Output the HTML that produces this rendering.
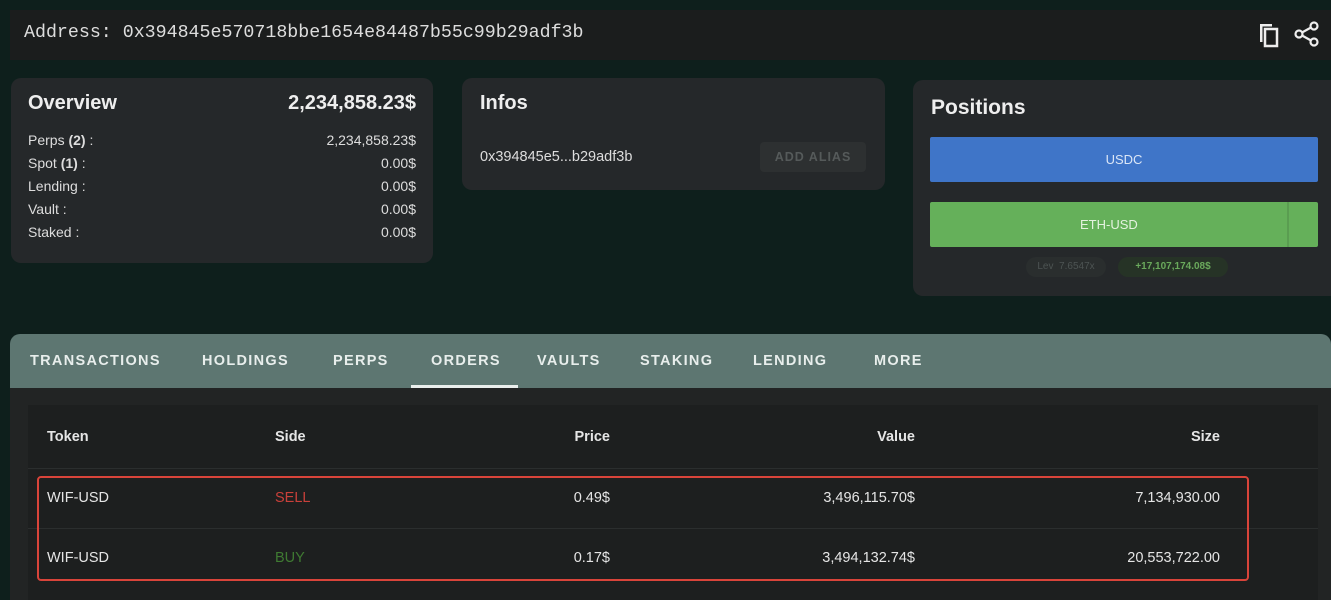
<!DOCTYPE html>
<html><head><style>
*{box-sizing:border-box;margin:0;padding:0}
body{width:1331px;height:600px;background:#0e1f1c;font-family:"Liberation Sans",sans-serif;color:#e6e6e6;position:relative;overflow:hidden}
.abs{position:absolute}
.card{background:#25282a;border-radius:10px}
.addr{left:10px;top:10px;width:1321px;height:50px;background:#1b1d1d;font-family:"Liberation Mono",monospace;font-size:18.3px;color:#ddd;padding:13px 14px}
.row{display:flex;justify-content:space-between;font-size:14px;color:#ddd;height:23px}
.tabs{left:10px;top:334px;width:1321px;height:54px;background:#5d7671;border-radius:10px 10px 0 0}
.tab{position:absolute;top:19px;font-size:14.5px;font-weight:bold;letter-spacing:1.3px;color:#e8eeec}
.panel{left:10px;top:388px;width:1321px;height:212px;background:#222424}
.tbl{left:28px;top:405px;width:1290px;height:195px;background:#1d1f1f}
.c{position:absolute;font-size:14.5px;color:#e5e5e5}
.line{position:absolute;left:28px;width:1290px;height:1px;background:#2b2e2e}
</style></head><body>
<div class="abs addr">Address: 0x394845e570718bbe1654e84487b55c99b29adf3b</div>
<svg class="abs" style="left:1256px;top:20px" width="26" height="30" viewBox="0 0 26 30"><path d="M4 4h12v2.5H6.5V22H4z" fill="#eee"/><rect x="9" y="9" width="12" height="17" fill="none" stroke="#eee" stroke-width="2.5"/></svg>
<svg class="abs" style="left:1294px;top:21px" width="26" height="26" viewBox="0 0 26 26"><circle cx="20" cy="5" r="3.5" fill="none" stroke="#eee" stroke-width="2.2"/><circle cx="5" cy="13" r="3.5" fill="none" stroke="#eee" stroke-width="2.2"/><circle cx="20" cy="21" r="3.5" fill="none" stroke="#eee" stroke-width="2.2"/><path d="M8 11.5l9-5M8 14.5l9 5" stroke="#eee" stroke-width="2.2"/></svg>

<div class="abs card" style="left:11px;top:78px;width:422px;height:185px;padding:14px 17px">
<div style="display:flex;justify-content:space-between;font-size:20px;font-weight:bold;color:#eee;margin-bottom:17px"><span>Overview</span><span>2,234,858.23$</span></div>
<div class="row"><span>Perps <b>(2)</b> :</span><span>2,234,858.23$</span></div>
<div class="row"><span>Spot <b>(1)</b> :</span><span>0.00$</span></div>
<div class="row"><span>Lending :</span><span>0.00$</span></div>
<div class="row"><span>Vault :</span><span>0.00$</span></div>
<div class="row"><span>Staked :</span><span>0.00$</span></div>
</div>

<div class="abs card" style="left:462px;top:78px;width:423px;height:112px;padding:14px 18px">
<div style="font-size:20px;font-weight:bold;color:#eee">Infos</div>
<div style="position:absolute;left:18px;top:71px;font-size:14.5px;color:#ddd">0x394845e5...b29adf3b</div>
<div style="position:absolute;left:298px;top:64px;width:106px;height:30px;background:#2d3031;border-radius:4px;font-size:12.5px;font-weight:bold;letter-spacing:1px;color:#555a5a;text-align:center;line-height:30px">ADD ALIAS</div>
</div>

<div class="abs card" style="left:913px;top:80px;width:430px;height:216px">
<div style="position:absolute;left:18px;top:16px;font-size:21px;font-weight:bold;color:#eee">Positions</div>
<div style="position:absolute;left:17px;top:57px;width:388px;height:45px;background:#3f75c8;border-radius:2px;color:#dbe6f6;font-size:13px;text-align:center;line-height:45px">USDC</div>
<div style="position:absolute;left:17px;top:122px;width:388px;height:45px;background:#65b05a;border-radius:2px;color:#e4f2df;font-size:13px;line-height:45px"><span style="position:absolute;left:150px">ETH-USD</span><div style="position:absolute;left:357px;top:0;width:2px;height:45px;background:#5a9d51"></div></div>
<div style="position:absolute;left:113px;top:177px;width:80px;height:20px;background:#2a2e2e;border-radius:10px;font-size:10px;color:#4d5453;text-align:center;line-height:20px">Lev&nbsp;&nbsp;7.6547x</div>
<div style="position:absolute;left:205px;top:177px;width:110px;height:20px;background:#263326;border-radius:10px;font-size:10px;font-weight:bold;color:#6aa95c;text-align:center;line-height:20px">+17,107,174.08$</div>
</div>

<div class="abs tabs">
<span class="tab" style="left:20px">TRANSACTIONS</span>
<span class="tab" style="left:192px">HOLDINGS</span>
<span class="tab" style="left:323px">PERPS</span>
<span class="tab" style="left:421px">ORDERS</span>
<span class="tab" style="left:527px">VAULTS</span>
<span class="tab" style="left:630px">STAKING</span>
<span class="tab" style="left:743px">LENDING</span>
<span class="tab" style="left:864px">MORE</span>
<div style="position:absolute;left:401px;top:51px;width:107px;height:3px;background:#e9eeec"></div>
</div>
<div class="abs panel"></div>
<div class="abs tbl"></div>
<div class="line" style="top:468px"></div>
<div class="line" style="top:528px"></div>
<div class="c" style="left:47px;top:429px;font-weight:bold">Token</div>
<div class="c" style="left:275px;top:429px;font-weight:bold">Side</div>
<div class="c" style="left:530px;width:80px;text-align:right;top:429px;font-weight:bold">Price</div>
<div class="c" style="left:800px;width:115px;text-align:right;top:429px;font-weight:bold">Value</div>
<div class="c" style="left:1100px;width:120px;text-align:right;top:429px;font-weight:bold">Size</div>

<div class="c" style="left:47px;top:490px">WIF-USD</div>
<div class="c" style="left:275px;top:490px;color:#c8403a">SELL</div>
<div class="c" style="left:530px;width:80px;text-align:right;top:490px">0.49$</div>
<div class="c" style="left:760px;width:155px;text-align:right;top:490px">3,496,115.70$</div>
<div class="c" style="left:1060px;width:160px;text-align:right;top:490px">7,134,930.00</div>

<div class="c" style="left:47px;top:550px">WIF-USD</div>
<div class="c" style="left:275px;top:550px;color:#3f7a32">BUY</div>
<div class="c" style="left:530px;width:80px;text-align:right;top:550px">0.17$</div>
<div class="c" style="left:760px;width:155px;text-align:right;top:550px">3,494,132.74$</div>
<div class="c" style="left:1060px;width:160px;text-align:right;top:550px">20,553,722.00</div>

<div class="abs" style="left:37px;top:476px;width:1212px;height:105px;border:2.5px solid #d9443a;border-radius:4px"></div>
</body></html>
